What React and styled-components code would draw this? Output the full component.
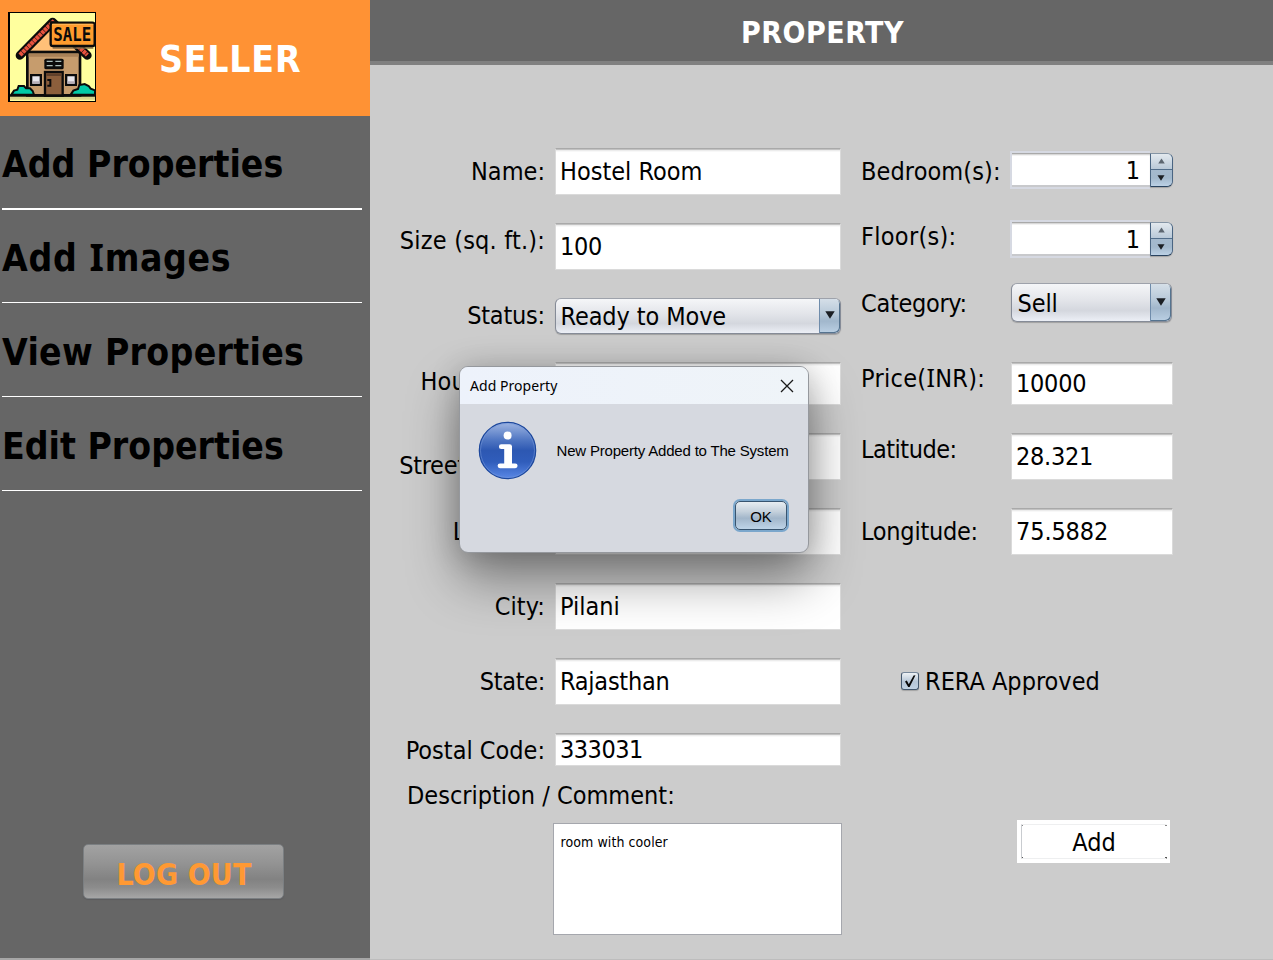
import React from "react";
import styled, { createGlobalStyle } from "styled-components";

const tahomaLike = `"DejaVu Sans Condensed", "Noto Sans", sans-serif`;

const GlobalStyle = createGlobalStyle`
  * { box-sizing: border-box; }
  body { margin: 0; background: #cccccc; }
`;

const Window = styled.div`
  position: relative;
  display: flex;
  width: 1273px;
  height: 960px;
  overflow: hidden;
  background: #cccccc;
  color: #000;
  font: 25px/32px ${tahomaLike};
  white-space: nowrap;
`;

/* Sidebar */
const Sidebar = styled.aside`
  display: flex;
  flex-direction: column;
  flex: none;
  width: 370px;
  height: 960px;
  background: #666666;
  border-bottom: 2px solid #a6a6a6;
`;

const Brand = styled.header`
  display: flex;
  gap: 63px;
  height: 116px;
  padding: 12px 0 0 8px;
  background: #ff9234;
`;

const BrandName = styled.h1`
  margin: 17px 0 0;
  color: #fff;
  font: bold 37px/62px ${tahomaLike};
  letter-spacing: 0.8px;
`;

const Nav = styled.nav`
  display: flex;
  flex-direction: column;
  width: 360px;
  margin-left: 2px;
`;

const NavItem = styled.a`
  height: ${(p) => p.$height}px;
  padding-top: ${(p) => p.$top}px;
  border-bottom: ${(p) => p.$rule || 1}px solid #fff;
  font: bold 37px/62px ${tahomaLike};
  letter-spacing: ${(p) => p.$spacing || 0}px;
`;

const SerifI = styled.span`
  font-family: "Noto Sans", sans-serif;
  line-height: 1px;
`;

const LogOut = styled.button`
  width: 201px;
  height: 55px;
  margin: auto 0 59px 83px;
  padding: 7px 0 0 1px;
  border: 1px solid #7b7f82;
  border-radius: 5px;
  background: linear-gradient(#a2a2a2, #939393 35%, #828282 65%, #8c8c8c 80%, #a6a6a6);
  box-shadow: 0 1px 1px #5b5b5e;
  color: #ff9933;
  font: bold 30px/40px ${tahomaLike};
  letter-spacing: 0.17px;
`;

/* Main area */
const Main = styled.main`
  display: flex;
  flex-direction: column;
  flex: 1;
  border-bottom: 1px solid #bdbdbd;
`;

const TitleBar = styled.header`
  height: 65px;
  padding: 13px 0 0 371px;
  background: #666666;
  border-bottom: 4px solid #808080;
  color: #fff;
  font: bold 30px/40px ${tahomaLike};
  letter-spacing: 0.49px;
`;

const Form = styled.div`
  display: flex;
  gap: 20px;
  padding-left: 28px;
`;

const LeftColumn = styled.div`
  display: grid;
  width: 443px;
  padding-top: 83px;
  grid-template-rows: 75px 75px 64px 71px 75px 75px 75px 75px 47px 43px 112px;
`;

const RightColumn = styled.div`
  display: grid;
  width: 312px;
  padding-top: 86px;
  grid-template-rows: 69px 63px 79px 71px 75px 158px 154px 43px;
`;

const Row = styled.div`
  display: grid;
  grid-template-columns: ${(p) => (p.$right ? "150px 162px" : "147px 286px")};
  column-gap: ${(p) => (p.$right ? 0 : 10)}px;
  align-items: start;
`;

const Label = styled.label`
  margin-top: ${(p) => p.$drop}px;
  padding-left: ${(p) => p.$indent || 0}px;
  text-align: ${(p) => p.$align || "right"};
  letter-spacing: ${(p) => p.$spacing || 0}px;
`;

const Field = styled.div`
  width: ${(p) => p.$width || 286}px;
  height: ${(p) => p.$height}px;
  padding: ${(p) => p.$top}px 0 0 4px;
  border: 1px solid #dadada;
  border-top-color: #a9a9a9;
  background: linear-gradient(#c2c2c2 0 1px, #ececec 1px 2px, #f8f8f8 2px 3px, #fff 3px);
  letter-spacing: ${(p) => p.$spacing || 0}px;
`;

const Combo = styled.div`
  display: flex;
  justify-content: space-between;
  width: ${(p) => p.$width}px;
  height: ${(p) => p.$height}px;
  border: 1px solid #858b97;
  border-top-color: #9ea2ab;
  border-radius: 6px;
  background: linear-gradient(#f5f6f8, #e2e4e9 45%, #d4d7de 72%, #eceff6);
  box-shadow: 0 1px 1px rgba(0, 0, 0, 0.22);
  overflow: hidden;
`;

const ComboText = styled.span`
  padding: ${(p) => p.$top}px 0 0 ${(p) => p.$left}px;
  letter-spacing: -0.1px;
`;

const ComboButton = styled.span`
  display: grid;
  place-items: center;
  width: 21px;
  padding-bottom: 2px;
  border-left: 1px solid #6f8cab;
  box-shadow: inset -1px -1px 0 #55738f;
  border-radius: 0 5px 5px 0;
  background: linear-gradient(#d5dfe8, #b6c8d8 45%, #a1b7cc 65%, #bbd0e4);
`;

const Spinner = styled.div`
  display: flex;
  align-items: center;
  width: 163px;
  height: 38px;
  margin-left: -1px;
`;

const SpinnerValue = styled.span`
  width: 140px;
  height: 38px;
  padding: 2px 10px 0 0;
  border: 1px solid #d6d9e2;
  border-width: 2px 0 2px 2px;
  background: linear-gradient(#a9a9a9 0 1px, #d8d8d8 1px 2px, #f2f2f2 2px 3px, #fff 3px 32px, #c8c9cc 32px);
  text-align: right;
`;

const SpinnerButtons = styled.span`
  display: grid;
  grid-template-rows: 16px 16px;
  width: 23px;
  margin-bottom: 1px;
  border: 1px solid #4a6582;
  border-top-color: #8595a5;
  border-bottom: 1px solid #29435f;
  border-radius: 0 6px 6px 0;
  overflow: hidden;
  background: #a8bccf;
  box-shadow: 0 1px 1px rgba(0, 0, 0, 0.2);
`;

const SpinnerHalf = styled.span`
  display: grid;
  place-items: center;
  padding-right: 1px;
  background: ${(p) =>
    p.$down
      ? "linear-gradient(#a4b9cd, #a2b8cc 50%, #bcd1e5)"
      : "linear-gradient(#e3e9ee, #b9c9d8)"};
  border-bottom: ${(p) => (p.$down ? 0 : 1)}px solid #516d8a;
`;

const Description = styled.div`
  width: 289px;
  height: 112px;
  margin-left: 154.5px;
  padding: 9px 7px;
  border: 1.5px solid #a5a7ad;
  background: #fff;
  font: 14px/18px ${tahomaLike};
  letter-spacing: 0.08px;
`;

const CheckRow = styled.label`
  display: flex;
  gap: 6px;
  padding-left: 40px;
  height: 32px;
`;

const CheckBox = styled.span`
  display: grid;
  place-items: center;
  width: 18px;
  height: 18px;
  margin-top: 6px;
  border: 1px solid #43576d;
  border-top-color: #77889b;
  border-radius: 3px;
  background: linear-gradient(#eef2f5, #b5c5d6 55%, #c1d2e3);
  box-shadow: 0 1px 1px rgba(0, 0, 0, 0.2);
`;

const AddButton = styled.button`
  width: 153px;
  height: 43px;
  margin-left: 156px;
  padding: 4px;
  border: 0;
  background: #fff;
  font: 25px/35px ${tahomaLike};
`;

const AddFace = styled.span`
  display: block;
  width: 146px;
  height: 35px;
  border: 1px solid #eeeff0;
  border-left-color: #c9ccd0;
  border-right-color: transparent;
  line-height: 35px;
  background:
    linear-gradient(#888 0 0) left top / 2px 2px no-repeat border-box,
    linear-gradient(#888 0 0) right top / 2px 2px no-repeat border-box,
    linear-gradient(#555 0 0) left bottom / 2px 2px no-repeat border-box,
    linear-gradient(#555 0 0) right bottom / 2px 2px no-repeat border-box;
`;

/* Dialog */
const Dialog = styled.section`
  position: absolute;
  left: 459px;
  top: 366px;
  width: 350px;
  height: 187px;
  border: 1px solid #95989d;
  border-radius: 9px;
  background: #d6d9e0;
  overflow: hidden;
  box-shadow: 0 26px 52px rgba(0, 0, 0, 0.4), 0 2px 30px rgba(0, 0, 0, 0.18);
`;

const DialogTitle = styled.header`
  display: flex;
  justify-content: space-between;
  align-items: center;
  height: 37px;
  padding: 0 14px 0 10px;
  background: linear-gradient(90deg, #edf2fb, #eff4f8);
  font: 14px/22px "Noto Sans", sans-serif;
  letter-spacing: 0.05px;
`;

const DialogBody = styled.div`
  display: flex;
  align-items: center;
  gap: 19.5px;
  padding: 17px 0 0 18px;
  font: 15px/20px "Liberation Sans", Arial, sans-serif;
  letter-spacing: -0.19px;
`;

const OkButton = styled.button`
  display: block;
  width: 52px;
  height: 29px;
  margin: 21px 0 0 275px;
  padding: 3px 0 0;
  border: 1px solid #38546f;
  border-radius: 5px;
  background: linear-gradient(#e8edf1, #c5d1dc 35%, #a2b6ca 60%, #bed4e8);
  box-shadow: 0 0 0 2px #7ba7cc;
  font: 15px/20px "Liberation Sans", Arial, sans-serif;
`;

const Arrow = ({ up, w = 10, h = 8, color = "#1b1f24" }) => (
  <svg width={w} height={h} viewBox="0 0 10 8">
    <path d={up ? "M5 0.3 9.7 7.7H0.3Z" : "M0.3 0.3H9.7L5 7.7Z"} fill={color} />
  </svg>
);

const Logo = styled.svg`
  width: 88px;
  height: 90px;
  overflow: visible;
`;

const HouseLogo = () => (
  <Logo viewBox="24 24 264 270">
    <rect x="24" y="24" width="264" height="270" fill="#000" />
    <rect x="30" y="27" width="255" height="264" fill="#ffff9e" />
    <path d="M30 278H285V287H30Z" fill="#d8d58d" />
    <path d="M82 142 160 62 242 142Z" fill="#ffc078" />
    <rect x="82" y="144" width="158" height="130" fill="#c69c6d" stroke="#0b0b0b" strokeWidth="8" />
    <path d="M86 150H236V158H86Z" fill="#a98157" />
    <path d="M60 154 158 54 262 154" fill="none" stroke="#0b0b0b" strokeWidth="26" strokeLinejoin="round" strokeLinecap="round" />
    <path d="M60 153 158 55 262 153" fill="none" stroke="#e8533f" strokeWidth="13" strokeDasharray="10 1.5" />
    <path d="M146 52H172L160 66Z" fill="#0b0b0b" />
    <rect x="133" y="164" width="58" height="32" rx="5" fill="#0b0b0b" />
    <path d="M140 172H158M166 172H184M140 185H158M166 185H184" stroke="#a9bcb9" strokeWidth="4" />
    <path d="M90 210H126V246H90ZM195 210H231V246H195Z" fill="#0b0b0b" />
    <path d="M97 217H119V239H97ZM202 217H224V239H202Z" fill="#e8e6ec" />
    <path d="M97 232H119V239H97ZM202 232H224V239H202Z" fill="#b5adb5" />
    <rect x="135" y="204" width="53" height="71" fill="#8c5f3c" stroke="#0b0b0b" strokeWidth="7" />
    <path d="M139 208H184V216H139Z" fill="#61412b" />
    <path d="M142 228H151V245H142" fill="none" stroke="#0b0b0b" strokeWidth="6" />
    <path d="M34 272 42 260 52 257 56 246H72L78 253H90L98 261 102 272Z" fill="#00c9a7" stroke="#0b0b0b" strokeWidth="6" />
    <path d="M212 272 220 260 234 255 238 243 254 240 266 246 272 254 285 259V272Z" fill="#00c9a7" stroke="#0b0b0b" strokeWidth="6" />
    <path d="M30 275H285" stroke="#0b0b0b" strokeWidth="7" />
    <path d="M158 130H280V134H158Z" fill="#8b7048" />
    <rect x="152" y="56" width="132" height="70" rx="7" fill="#ff9c2e" stroke="#0b0b0b" strokeWidth="7" />
    <path d="M156 61H280" stroke="#ffb95a" strokeWidth="3" />
    <text x="160" y="112" textLength="114" lengthAdjust="spacingAndGlyphs" fontFamily="DejaVu Sans Mono" fontWeight="bold" fontSize="57" fill="#0b0b0b">SALE</text>
  </Logo>
);

const InfoIcon = () => (
  <svg width="59" height="59" viewBox="0 0 59 59">
    <defs>
      <linearGradient id="infoBlue" x1="0" y1="0" x2="0" y2="1">
        <stop offset="0" stopColor="#a0b6e2" />
        <stop offset="0.3" stopColor="#5379c4" />
        <stop offset="0.5" stopColor="#2d58b2" />
        <stop offset="0.7" stopColor="#305dbb" />
        <stop offset="1" stopColor="#5a88e6" />
      </linearGradient>
    </defs>
    <circle cx="29.5" cy="29.5" r="28.2" fill="url(#infoBlue)" stroke="#1c479c" strokeWidth="1.2" />
    <circle cx="29.5" cy="29.5" r="27" fill="none" stroke="#7597d8" strokeOpacity="0.55" />
    <circle cx="29.6" cy="14.6" r="4" fill="#fff" />
    <path d="M23.3 25.7H31.6V44.8M22 44.8H37.2" fill="none" stroke="#fff" strokeWidth="4.8" strokeLinecap="round" strokeLinejoin="round" />
    <path d="M26.2 25H34V45H26.2Z" fill="#fff" />
  </svg>
);

const SpinnerControl = ({ value }) => (
  <Spinner>
    <SpinnerValue>{value}</SpinnerValue>
    <SpinnerButtons>
      <SpinnerHalf><Arrow up w={7} h={6} color="#5c6670" /></SpinnerHalf>
      <SpinnerHalf $down><Arrow w={8} h={6} /></SpinnerHalf>
    </SpinnerButtons>
  </Spinner>
);

export default function App() {
  return (
    <Window>
      <GlobalStyle />
      <Sidebar>
        <Brand>
          <HouseLogo />
          <BrandName>SELLER</BrandName>
        </Brand>
        <Nav>
          <NavItem $height={94} $top={18} $rule={2}>Add Properties</NavItem>
          <NavItem $height={93} $top={18} $spacing={0.65}>Add <SerifI>I</SerifI>mages</NavItem>
          <NavItem $height={94} $top={19} $spacing={0.3}>View Properties</NavItem>
          <NavItem $height={94} $top={19}>Edit Properties</NavItem>
        </Nav>
        <LogOut>LOG OUT</LogOut>
      </Sidebar>
      <Main>
        <TitleBar>PROPERTY</TitleBar>
        <Form>
          <LeftColumn>
            <Row>
              <Label $drop={8}>Name:</Label>
              <Field $height={47} $top={7}>Hostel Room</Field>
            </Row>
            <Row>
              <Label $drop={2} $spacing={0.2}>Size (sq. ft.):</Label>
              <Field $height={47} $top={7} $spacing={-0.3}>100</Field>
            </Row>
            <Row>
              <Label $drop={2} $spacing={-0.2}>Status:</Label>
              <Combo $width={286} $height={36}>
                <ComboText $top={2} $left={4.5}>Ready to Move</ComboText>
                <ComboButton><Arrow /></ComboButton>
              </Combo>
            </Row>
            <Row>
              <Label $drop={4} $spacing={0.2}>House No.:</Label>
              <Field $height={43} $top={5} />
            </Row>
            <Row>
              <Label $drop={17} $spacing={-0.3}>Street Name:</Label>
              <Field $height={47} $top={7} />
            </Row>
            <Row>
              <Label $drop={8}>Locality:</Label>
              <Field $height={47} $top={7} />
            </Row>
            <Row>
              <Label $drop={8} $spacing={0.1}>City:</Label>
              <Field $height={47} $top={7}>Pilani</Field>
            </Row>
            <Row>
              <Label $drop={8} $spacing={-0.3}>State:</Label>
              <Field $height={47} $top={7} $spacing={-0.25}>Rajasthan</Field>
            </Row>
            <Row>
              <Label $drop={2}>Postal Code:</Label>
              <Field $height={33} $top={0} $spacing={-0.5}>333031</Field>
            </Row>
            <Row>
              <Label $align="left" $drop={0} $indent={9}>Description / Comment:</Label>
            </Row>
            <Description>room with cooler</Description>
          </LeftColumn>
          <RightColumn>
            <Row $right>
              <Label $align="left" $drop={5} $spacing={0.1}>Bedroom(s):</Label>
              <SpinnerControl value="1" />
            </Row>
            <Row $right>
              <Label $align="left" $drop={1} $spacing={0.3}>Floor(s):</Label>
              <SpinnerControl value="1" />
            </Row>
            <Row $right>
              <Label $align="left" $drop={5} $spacing={-0.3}>Category:</Label>
              <Combo $width={161} $height={39}>
                <ComboText $top={4} $left={5.5}>Sell</ComboText>
                <ComboButton><Arrow /></ComboButton>
              </Combo>
            </Row>
            <Row $right>
              <Label $align="left" $drop={1} $spacing={0.3}>Price(<SerifI>I</SerifI>NR):</Label>
              <Field $width={162} $height={43} $top={5} $spacing={-0.25}>10000</Field>
            </Row>
            <Row $right>
              <Label $align="left" $drop={1} $spacing={-0.5}>Latitude:</Label>
              <Field $width={162} $height={47} $top={7} $spacing={-0.27}>28.321</Field>
            </Row>
            <Row $right>
              <Label $align="left" $drop={8} $spacing={-0.25}>Longitude:</Label>
              <Field $width={162} $height={47} $top={7} $spacing={-0.11}>75.5882</Field>
            </Row>
            <CheckRow>
              <CheckBox>
                <svg width="14" height="15" viewBox="0 0 14 15">
                  <path d="M2 7.5 3.8 6.6 5.8 10.2 10.6 1.5 12.5 1.2 6.6 13H5.2Z" fill="#080808" />
                </svg>
              </CheckBox>
              RERA Approved
            </CheckRow>
            <AddButton><AddFace>Add</AddFace></AddButton>
          </RightColumn>
        </Form>
      </Main>
      <Dialog role="dialog">
        <DialogTitle>
          Add Property
          <svg width="14" height="14" viewBox="0 0 14 14">
            <path d="M1 1 13 13M13 1 1 13" stroke="#1a1a1a" strokeWidth="1.3" />
          </svg>
        </DialogTitle>
        <DialogBody>
          <InfoIcon />
          New Property Added to The System
        </DialogBody>
        <OkButton>OK</OkButton>
      </Dialog>
    </Window>
  );
}
